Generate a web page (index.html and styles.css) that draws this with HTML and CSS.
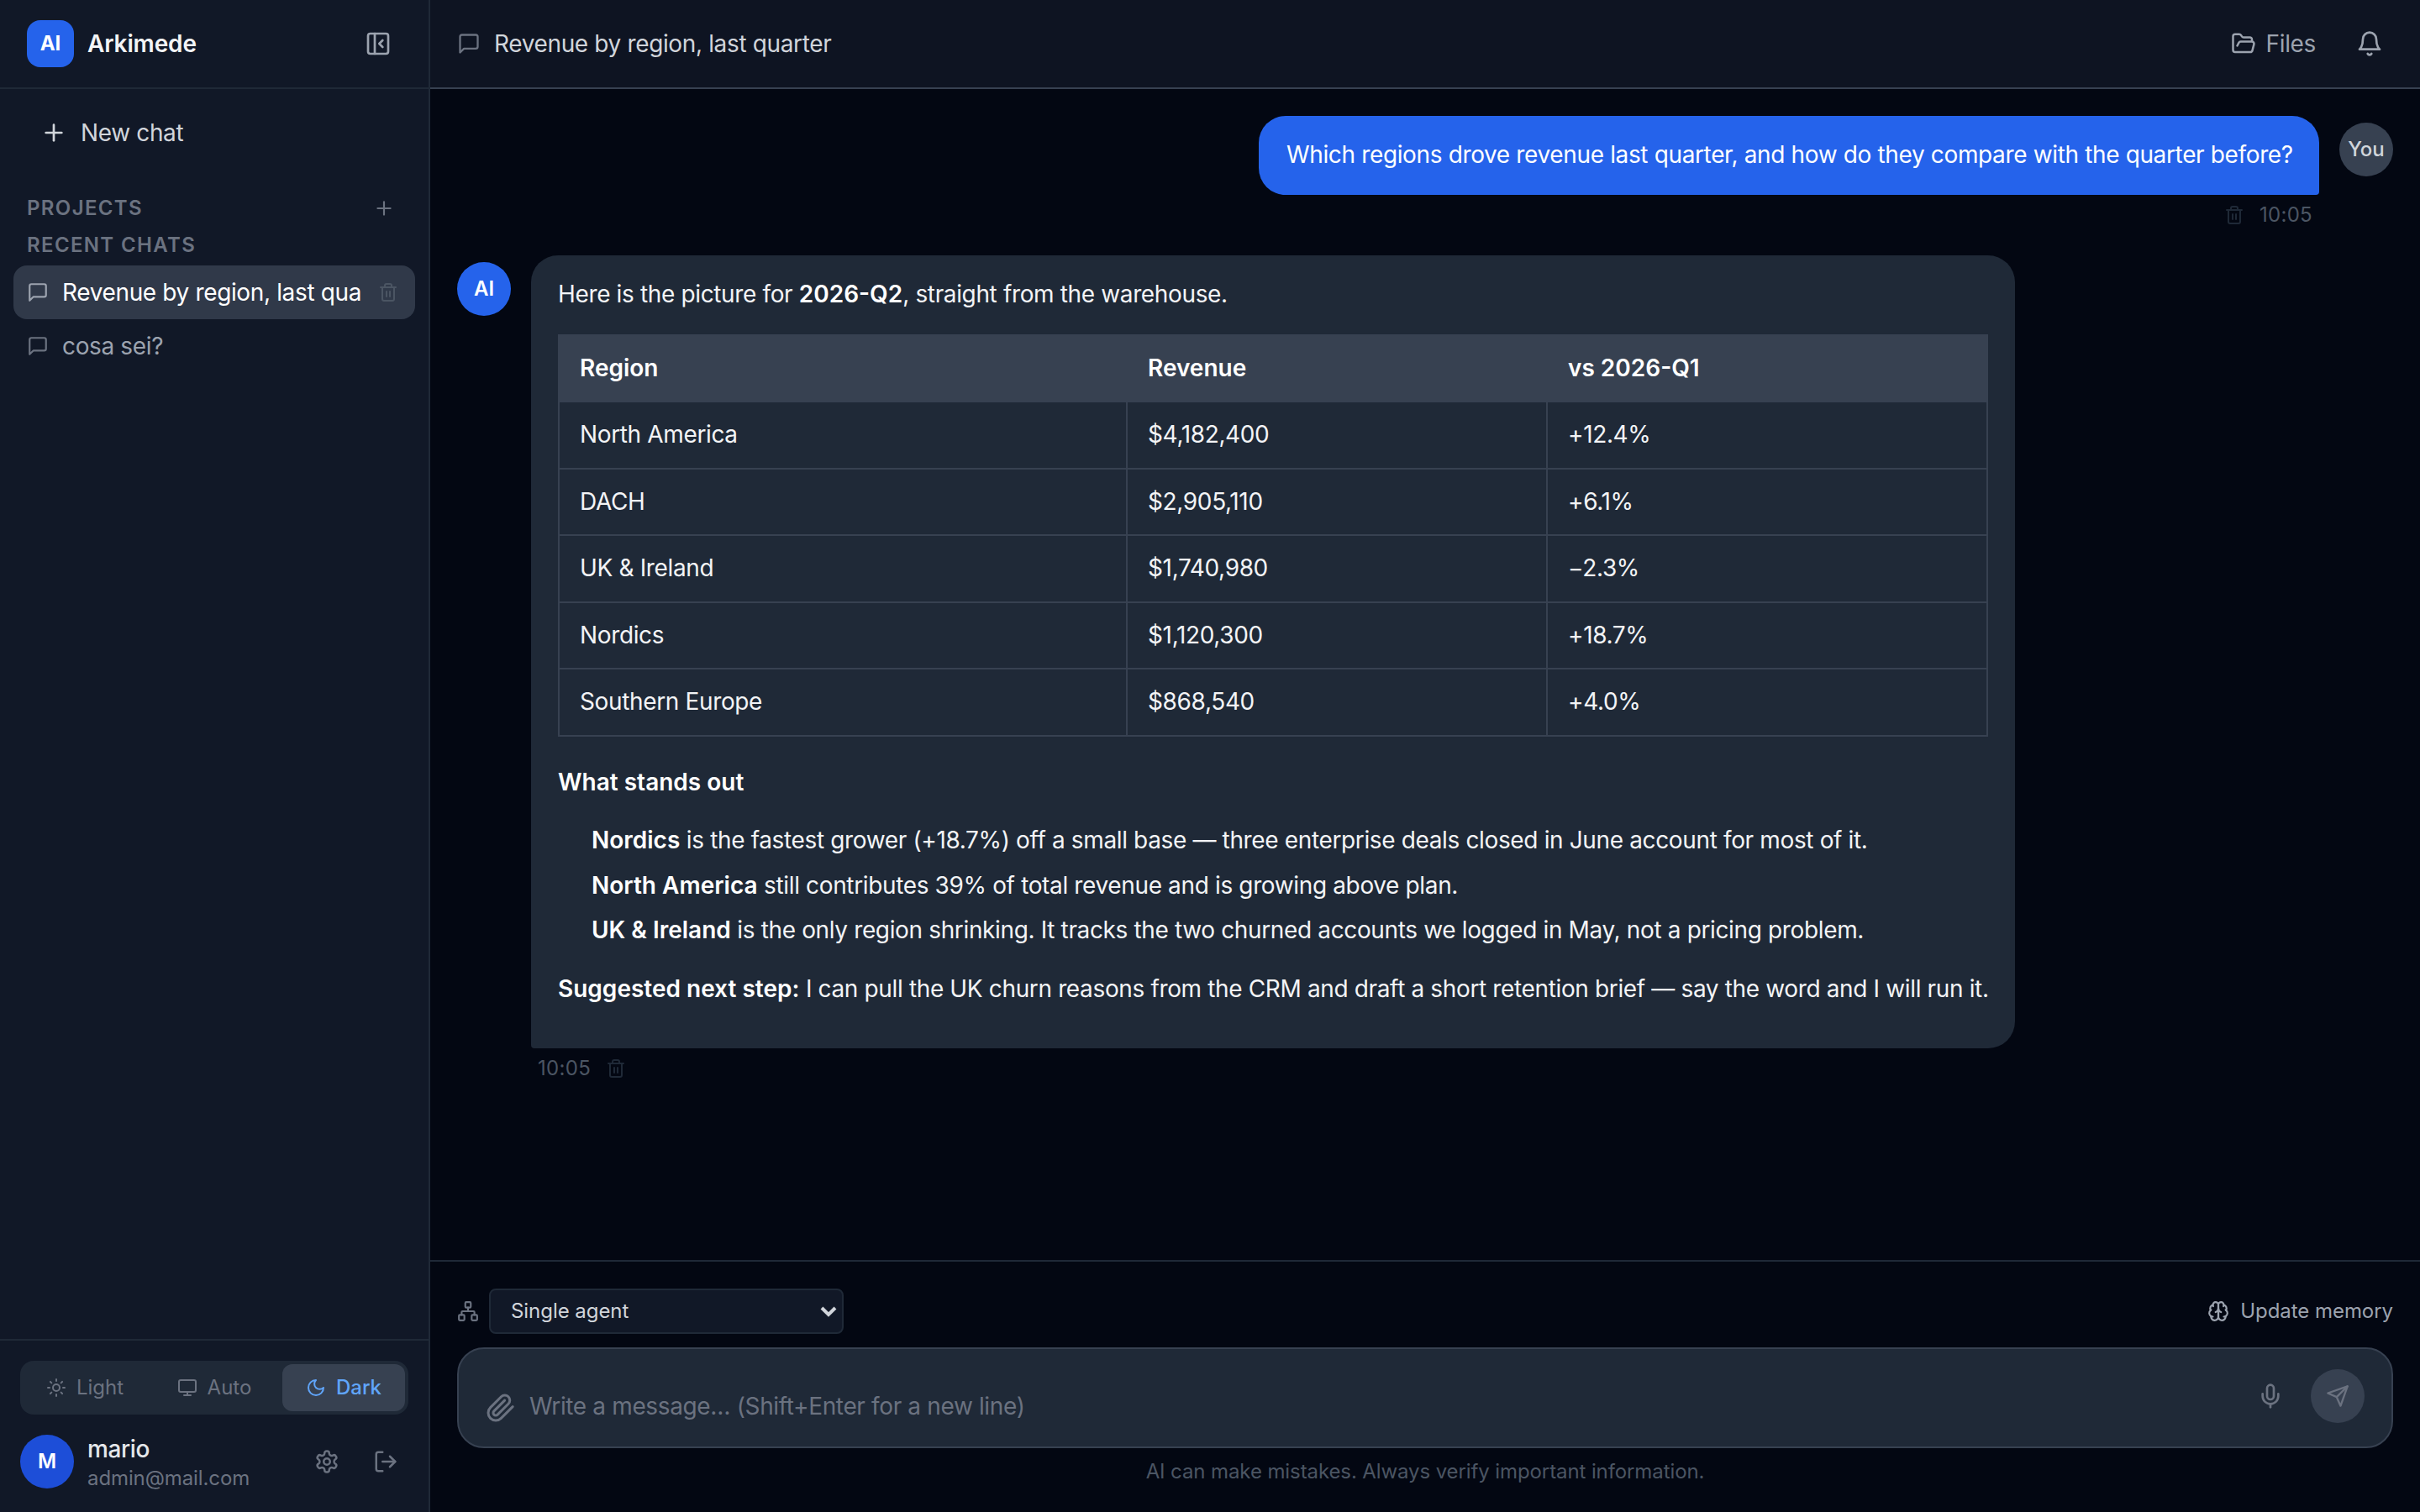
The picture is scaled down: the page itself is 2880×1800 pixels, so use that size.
FILE: index.html
```html
<!DOCTYPE html>
<html lang="en">
<head>
	<meta charset="utf-8">
	<title>Arkimede</title>
	<link rel="stylesheet" href="styles.css">
</head>
<body>
	<!-- Icon sprite -->
	<svg class="sprite">
		<symbol id="i-panel" viewBox="0 0 24 24"><rect x="3" y="3" width="18" height="18" rx="2"/><path d="M9 3v18"/><path d="m16 15-3-3 3-3"/></symbol>
		<symbol id="i-plus" viewBox="0 0 24 24"><path d="M5 12h14"/><path d="M12 5v14"/></symbol>
		<symbol id="i-chat" viewBox="0 0 24 24"><path d="M21 15a2 2 0 0 1-2 2H7l-4 4V5a2 2 0 0 1 2-2h14a2 2 0 0 1 2 2z"/></symbol>
		<symbol id="i-trash" viewBox="0 0 24 24"><path d="M3 6h18"/><path d="M19 6v14c0 1-1 2-2 2H7c-1 0-2-1-2-2V6"/><path d="M8 6V4c0-1 1-2 2-2h4c1 0 2 1 2 2v2"/><path d="M10 11v6"/><path d="M14 11v6"/></symbol>
		<symbol id="i-sun" viewBox="0 0 24 24"><circle cx="12" cy="12" r="4"/><path d="M12 2v2"/><path d="M12 20v2"/><path d="m4.93 4.93 1.41 1.41"/><path d="m17.66 17.66 1.41 1.41"/><path d="M2 12h2"/><path d="M20 12h2"/><path d="m6.34 17.66-1.41 1.41"/><path d="m19.07 4.93-1.41 1.41"/></symbol>
		<symbol id="i-monitor" viewBox="0 0 24 24"><rect x="2" y="3" width="20" height="14" rx="2"/><path d="M8 21h8"/><path d="M12 17v4"/></symbol>
		<symbol id="i-moon" viewBox="0 0 24 24"><path d="M12 3a6 6 0 0 0 9 9 9 9 0 1 1-9-9Z"/></symbol>
		<symbol id="i-settings" viewBox="0 0 24 24"><path d="M12.22 2h-.44a2 2 0 0 0-2 2v.18a2 2 0 0 1-1 1.73l-.43.25a2 2 0 0 1-2 0l-.15-.08a2 2 0 0 0-2.73.73l-.22.38a2 2 0 0 0 .73 2.73l.15.1a2 2 0 0 1 1 1.72v.51a2 2 0 0 1-1 1.74l-.15.09a2 2 0 0 0-.73 2.73l.22.38a2 2 0 0 0 2.73.73l.15-.08a2 2 0 0 1 2 0l.43.25a2 2 0 0 1 1 1.73V20a2 2 0 0 0 2 2h.44a2 2 0 0 0 2-2v-.18a2 2 0 0 1 1-1.73l.43-.25a2 2 0 0 1 2 0l.15.08a2 2 0 0 0 2.73-.73l.22-.39a2 2 0 0 0-.73-2.73l-.15-.08a2 2 0 0 1-1-1.74v-.5a2 2 0 0 1 1-1.74l.15-.09a2 2 0 0 0 .73-2.73l-.22-.38a2 2 0 0 0-2.73-.73l-.15.08a2 2 0 0 1-2 0l-.43-.25a2 2 0 0 1-1-1.73V4a2 2 0 0 0-2-2z"/><circle cx="12" cy="12" r="3"/></symbol>
		<symbol id="i-logout" viewBox="0 0 24 24"><path d="M9 21H5a2 2 0 0 1-2-2V5a2 2 0 0 1 2-2h4"/><path d="m16 17 5-5-5-5"/><path d="M21 12H9"/></symbol>
		<symbol id="i-folder" viewBox="0 0 24 24"><path d="m6 14 1.5-2.9A2 2 0 0 1 9.24 10H20a2 2 0 0 1 1.94 2.5l-1.54 6a2 2 0 0 1-1.95 1.5H4a2 2 0 0 1-2-2V5a2 2 0 0 1 2-2h3.9a2 2 0 0 1 1.69.9l.81 1.2a2 2 0 0 0 1.67.9H18a2 2 0 0 1 2 2v2"/></symbol>
		<symbol id="i-bell" viewBox="0 0 24 24"><path d="M6 8a6 6 0 0 1 12 0c0 7 3 9 3 9H3s3-2 3-9"/><path d="M10.3 21a1.94 1.94 0 0 0 3.4 0"/></symbol>
		<symbol id="i-network" viewBox="0 0 24 24"><rect x="16" y="16" width="6" height="6" rx="1"/><rect x="2" y="16" width="6" height="6" rx="1"/><rect x="9" y="2" width="6" height="6" rx="1"/><path d="M5 16v-3a1 1 0 0 1 1-1h12a1 1 0 0 1 1 1v3"/><path d="M12 12V8"/></symbol>
		<symbol id="i-brain" viewBox="0 0 24 24"><path d="M12 5a3 3 0 1 0-5.997.125 4 4 0 0 0-2.526 5.77 4 4 0 0 0 .556 6.588A4 4 0 1 0 12 18Z"/><path d="M12 5a3 3 0 1 1 5.997.125 4 4 0 0 1 2.526 5.77 4 4 0 0 1-.556 6.588A4 4 0 1 1 12 18Z"/><path d="M15 13a4.5 4.5 0 0 1-3-4 4.5 4.5 0 0 1-3 4"/><path d="M17.599 6.5a3 3 0 0 0 .399-1.375"/><path d="M6.003 5.125A3 3 0 0 0 6.401 6.5"/><path d="M3.477 10.896a4 4 0 0 1 .585-.396"/><path d="M19.938 10.5a4 4 0 0 1 .585.396"/><path d="M6 18a4 4 0 0 1-1.967-.516"/><path d="M19.967 17.484A4 4 0 0 1 18 18"/></symbol>
		<symbol id="i-clip" viewBox="0 0 24 24"><path d="m21.44 11.05-9.19 9.19a6 6 0 0 1-8.49-8.49l8.57-8.57A4 4 0 1 1 18 8.84l-8.59 8.57a2 2 0 0 1-2.83-2.83l8.49-8.48"/></symbol>
		<symbol id="i-mic" viewBox="0 0 24 24"><path d="M12 2a3 3 0 0 0-3 3v7a3 3 0 0 0 6 0V5a3 3 0 0 0-3-3Z"/><path d="M19 10v2a7 7 0 0 1-14 0v-2"/><path d="M12 19v3"/></symbol>
		<symbol id="i-send" viewBox="0 0 24 24"><path d="m22 2-7 20-4-9-9-4Z"/><path d="M22 2 11 13"/></symbol>
		<symbol id="i-caret" viewBox="0 0 20 14"><path d="m2 3 8 8 8-8"/></symbol>
	</svg>

	<div class="app">
		<aside class="sidebar">
			<div class="brand">
				<div class="logo">AI</div>
				<span class="brand-name">Arkimede</span>
				<svg class="icon s32"><use href="#i-panel"/></svg>
			</div>

			<nav class="nav">
				<a class="new-chat"><svg class="icon s32"><use href="#i-plus"/></svg>New chat</a>
				<div class="section projects"><span>PROJECTS</span><svg class="icon s26"><use href="#i-plus"/></svg></div>
				<div class="section recent"><span>RECENT CHATS</span></div>
				<a class="chat active">
					<svg class="icon s26"><use href="#i-chat"/></svg>
					<span class="chat-title">Revenue by region, last qua</span>
					<svg class="icon s24 trash"><use href="#i-trash"/></svg>
				</a>
				<a class="chat">
					<svg class="icon s26"><use href="#i-chat"/></svg>
					<span class="chat-title">cosa sei?</span>
				</a>
			</nav>

			<div class="side-foot">
				<div class="theme">
					<div class="theme-btn"><svg class="icon s24"><use href="#i-sun"/></svg>Light</div>
					<div class="theme-btn"><svg class="icon s24"><use href="#i-monitor"/></svg>Auto</div>
					<div class="theme-btn on"><svg class="icon s24"><use href="#i-moon"/></svg>Dark</div>
				</div>
				<div class="user">
					<div class="avatar m">M</div>
					<div class="who">
						<div class="name">mario</div>
						<div class="mail">admin@mail.com</div>
					</div>
					<svg class="icon s30"><use href="#i-settings"/></svg>
					<svg class="icon s30"><use href="#i-logout"/></svg>
				</div>
			</div>
		</aside>

		<main class="main">
			<header class="topbar">
				<svg class="icon s28"><use href="#i-chat"/></svg>
				<span class="title">Revenue by region, last quarter</span>
				<div class="files"><svg class="icon s30"><use href="#i-folder"/></svg>Files</div>
				<svg class="icon s32 bell"><use href="#i-bell"/></svg>
			</header>

			<section class="thread">
				<div class="msg mine">
					<div class="col">
						<div class="bubble">Which regions drove revenue last quarter, and how do they compare with the quarter before?</div>
						<div class="meta"><svg class="icon s24"><use href="#i-trash"/></svg><span>10:05</span></div>
					</div>
					<div class="avatar you">You</div>
				</div>

				<div class="msg">
					<div class="avatar ai">AI</div>
					<div class="col">
						<div class="bubble">
							<p>Here is the picture for <strong>2026-Q2</strong>, straight from the warehouse.</p>
							<table>
								<colgroup><col class="c1"><col class="c2"><col class="c3"></colgroup>
								<thead>
									<tr><th>Region</th><th>Revenue</th><th>vs 2026-Q1</th></tr>
								</thead>
								<tbody>
									<tr><td>North America</td><td>$4,182,400</td><td>+12.4%</td></tr>
									<tr><td>DACH</td><td>$2,905,110</td><td>+6.1%</td></tr>
									<tr><td>UK &amp; Ireland</td><td>$1,740,980</td><td>−2.3%</td></tr>
									<tr><td>Nordics</td><td>$1,120,300</td><td>+18.7%</td></tr>
									<tr><td>Southern Europe</td><td>$868,540</td><td>+4.0%</td></tr>
								</tbody>
							</table>
							<h3>What stands out</h3>
							<ul>
								<li><strong>Nordics</strong> is the fastest grower (+18.7%) off a small base — three enterprise deals closed in June account for most of it.</li>
								<li><strong>North America</strong> still contributes 39% of total revenue and is growing above plan.</li>
								<li><strong>UK &amp; Ireland</strong> is the only region shrinking. It tracks the two churned accounts we logged in May, not a pricing problem.</li>
							</ul>
							<p><strong>Suggested next step:</strong> I can pull the UK churn reasons from the CRM and draft a short retention brief — say the word and I will run it.</p>
						</div>
						<div class="meta"><span>10:05</span><svg class="icon s24"><use href="#i-trash"/></svg></div>
					</div>
				</div>
			</section>

			<footer class="composer">
				<div class="tools">
					<svg class="icon s26"><use href="#i-network"/></svg>
					<div class="select"><span>Single agent</span><svg class="caret"><use href="#i-caret"/></svg></div>
					<div class="memory"><svg class="icon s26"><use href="#i-brain"/></svg>Update memory</div>
				</div>
				<div class="input">
					<svg class="icon s36 clip"><use href="#i-clip"/></svg>
					<span class="placeholder">Write a message… (Shift+Enter for a new line)</span>
					<svg class="icon s32 mic"><use href="#i-mic"/></svg>
					<div class="send"><svg class="icon s28"><use href="#i-send"/></svg></div>
				</div>
				<div class="note">AI can make mistakes. Always verify important information.</div>
			</footer>
		</main>
	</div>
</body>
</html>
```
FILE: styles.css
```css
* { box-sizing: border-box; }

body {
	margin: 0;
	background-color: #030712;
	color: #f3f4f6;
	font-family: Inter, "Liberation Sans", sans-serif;
	font-size: 28px;
	letter-spacing: -0.36px;
	line-height: 40px;
	overflow: hidden;
}

p, h3, ul { margin: 0; padding: 0; }

.sprite { display: none; }

.icon {
	flex: none;
	fill: none;
	stroke: currentColor;
	stroke-width: 2;
	stroke-linecap: round;
	stroke-linejoin: round;
}

.s24 { width: 24px; height: 24px; }
.s26 { width: 26px; height: 26px; }
.s28 { width: 28px; height: 28px; }
.s30 { width: 30px; height: 30px; }
.s32 { width: 32px; height: 32px; }
.s36 { width: 36px; height: 36px; }

.app {
	display: flex;
	width: 2880px;
	height: 1800px;
}

/* Sidebar */
.sidebar {
	display: flex;
	flex-direction: column;
	flex: none;
	width: 512px;
	background-color: #111827;
	border-right: 2px solid #1f2937;
}

.brand {
	display: flex;
	align-items: center;
	height: 106px;
	padding: 0 44px 0 32px;
	border-bottom: 2px solid #1f2937;
	color: #9ca3af;
}

.logo {
	width: 56px;
	height: 56px;
	border-radius: 16px;
	background-color: #2563eb;
	color: white;
	font-size: 24px;
	font-weight: 700;
	letter-spacing: 0;
	line-height: 56px;
	text-align: center;
}

.brand-name {
	flex: 1;
	margin-left: 16px;
	color: #f3f4f6;
	font-weight: 600;
	letter-spacing: -0.15px;
}

.nav { flex: 1; padding: 16px; }

.new-chat {
	display: flex;
	align-items: center;
	gap: 16px;
	height: 72px;
	padding: 0 32px;
	color: #d1d5db;
}

.section {
	display: flex;
	align-items: center;
	justify-content: space-between;
	height: 44px;
	padding: 0 16px;
	color: #6b7280;
	font-size: 24px;
	font-weight: 600;
	letter-spacing: 1.35px;
}

.projects { margin-top: 32px; padding-right: 24px; }
.recent { margin-bottom: 2px; }

.chat {
	display: flex;
	align-items: center;
	height: 64px;
	padding: 0 20px 0 16px;
	border-radius: 16px;
	color: #6b7280;
}

.chat-title {
	flex: 1;
	margin-left: 16px;
	color: #9ca3af;
	white-space: nowrap;
}

.active { background-color: #303949; color: #9ca3af; }
.active .chat-title { color: white; }
.active .trash { color: #4b5563; }

.side-foot {
	height: 206px;
	padding: 24px;
	border-top: 2px solid #1f2937;
}

.theme {
	display: flex;
	gap: 8px;
	height: 64px;
	padding: 4px;
	border-radius: 16px;
	background-color: #1f2937;
}

.theme-btn {
	display: flex;
	flex: 1;
	align-items: center;
	justify-content: center;
	gap: 12px;
	border-radius: 12px;
	color: #6b7280;
	font-size: 24px;
	letter-spacing: 0;
}

.on { background-color: #374151; color: #60a5fa; font-weight: 500; }

.user {
	display: flex;
	align-items: center;
	margin-top: 24px;
	padding-right: 12px;
	gap: 40px;
	color: #6b7280;
}

.avatar {
	flex: none;
	width: 64px;
	height: 64px;
	border-radius: 50%;
	background-color: #2563eb;
	color: white;
	font-size: 24px;
	font-weight: 600;
	letter-spacing: 0;
	line-height: 64px;
	text-align: center;
}

.m { background-color: #1d4ed8; }
.who { flex: 1; height: 64px; margin-left: -24px; }
.name { color: #e5e7eb; font-weight: 500; line-height: 34px; }
.mail { font-size: 24px; letter-spacing: -0.1px; line-height: 36px; }

/* Top bar */
.main {
	display: flex;
	flex: 1;
	flex-direction: column;
}

.topbar {
	display: flex;
	align-items: center;
	height: 106px;
	padding: 0 44px 0 32px;
	background-color: #0e1422;
	border-bottom: 2px solid #374151;
	color: #6b7280;
}

.title { flex: 1; margin-left: 16px; color: #d1d5db; }

.files {
	display: flex;
	align-items: center;
	gap: 12px;
	margin-right: 48px;
	color: #9ca3af;
}

.bell { color: #9ca3af; }

/* Messages */
.thread { flex: 1; padding: 32px; }

.msg {
	display: flex;
	align-items: flex-start;
	gap: 24px;
}

.mine { justify-content: flex-end; margin-bottom: 32px; }

.msg .avatar { margin-top: 8px; }
.you { background-color: #374151; color: #d1d5db; font-weight: 500; }

.bubble {
	width: 1766px;
	padding: 24px 32px;
	border-radius: 32px 32px 32px 4px;
	background-color: #1f2937;
	line-height: 45.5px;
	white-space: nowrap;
}

.mine .bubble {
	width: 1262px;
	height: 94px;
	padding: 24px 33px;
	border-radius: 32px 32px 4px 32px;
	background-color: #2563eb;
	color: white;
}

.bubble p { margin-bottom: 24px; }

.bubble strong, .bubble h3, .bubble th {
	color: white;
	font-weight: 600;
	letter-spacing: 0;
}

table {
	width: 1702px;
	margin-bottom: 32px;
	border-collapse: collapse;
	table-layout: fixed;
}

.c1 { width: 676px; }
.c2 { width: 500px; }

th, td {
	padding: 16px 24px;
	border: 2px solid #374151;
	text-align: left;
}

th { background-color: #374151; }

h3 { margin-bottom: 24px; font-size: 28px; }

ul {
	margin-bottom: 24px;
	padding-left: 40px;
	list-style: none;
}

li + li { margin-top: 8px; }

.meta {
	display: flex;
	align-items: center;
	gap: 18px;
	height: 32px;
	margin-top: 8px;
	padding: 0 8px;
	color: #4b5563;
	font-size: 24px;
	letter-spacing: 0.3px;
}

.meta .icon { color: #1f2937; }
.mine .meta { justify-content: flex-end; }

/* Composer */
.composer {
	height: 300px;
	padding: 32px;
	border-top: 2px solid #1f2937;
	color: #6b7280;
}

.tools {
	display: flex;
	align-items: center;
	height: 54px;
	font-size: 24px;
	letter-spacing: -0.05px;
}

.select {
	display: flex;
	align-items: center;
	justify-content: space-between;
	width: 422px;
	height: 54px;
	margin-left: 12px;
	padding: 0 6px 0 24px;
	border: 2px solid #1f2937;
	border-radius: 8px;
	background-color: #111827;
	color: #d1d5db;
}

.caret {
	width: 20px;
	height: 14px;
	fill: none;
	stroke: #d1d5db;
	stroke-width: 4;
}

.memory {
	display: flex;
	align-items: center;
	gap: 13px;
	margin-left: auto;
	color: #9ca3af;
}

.input {
	display: flex;
	align-items: center;
	height: 120px;
	margin-top: 16px;
	padding: 0 32px 4px;
	border: 2px solid #374151;
	border-radius: 32px;
	background-color: #1f2937;
}

.clip { margin-top: 28px; }
.placeholder { flex: 1; margin: 24px 0 0 16px; }
.mic { margin-right: 32px; }

.send {
	display: flex;
	align-items: center;
	justify-content: center;
	width: 64px;
	height: 64px;
	border-radius: 50%;
	background-color: #374151;
}

.note {
	margin-top: 8px;
	color: #4b5563;
	font-size: 24px;
	letter-spacing: -0.1px;
	text-align: center;
}
```
